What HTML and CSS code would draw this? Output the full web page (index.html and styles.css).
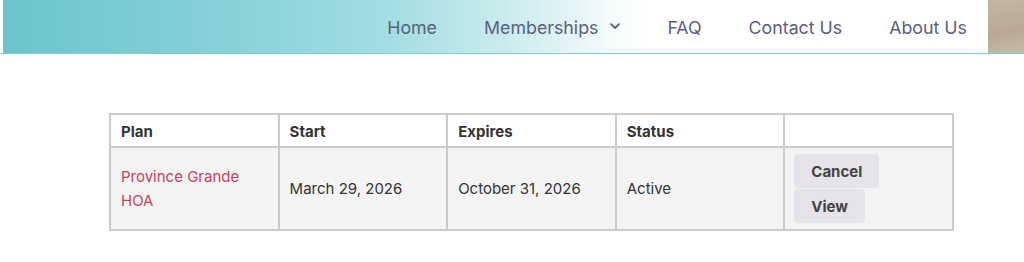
FILE: index.html
```html
<!DOCTYPE html>
<html>
<head>
<meta charset="utf-8">
<link rel="stylesheet" href="styles.css">
</head>
<body>
<header class="topbar">
  <div class="band">
    <nav class="nav">
      <a class="nav-link" href="#">Home</a>
      <a class="nav-link" href="#">Memberships
        <svg class="chev" width="10" height="7" viewBox="0 0 10 7"><path d="M1 1.2 L5 5 L9 1.2" fill="none" stroke="#5a5f7d" stroke-width="1.8" stroke-linecap="round" stroke-linejoin="round"/></svg>
      </a>
      <a class="nav-link" href="#">FAQ</a>
      <a class="nav-link" href="#">Contact Us</a>
      <a class="nav-link" href="#">About Us</a>
    </nav>
    <div class="photo"></div>
  </div>
</header>
<main class="content">
  <table class="memberships">
    <thead>
      <tr><th>Plan</th><th>Start</th><th>Expires</th><th>Status</th><th></th></tr>
    </thead>
    <tbody>
      <tr>
        <td><a class="plan" href="#">Province Grande HOA</a></td>
        <td>March 29, 2026</td>
        <td>October 31, 2026</td>
        <td>Active</td>
        <td class="actions">
          <button class="btn">Cancel</button>
          <button class="btn">View</button>
        </td>
      </tr>
    </tbody>
  </table>
</main>
</body>
</html>
```

FILE: styles.css
```css
* { box-sizing: border-box; }
body {
  margin: 0;
  background: #fff;
  font-family: Inter, "Noto Sans", sans-serif;
}
.topbar {
  border-bottom: 1px solid #7fd0d6;
  height: 54px;
}
.band {
  margin-left: 3px;
  height: 53px;
  display: flex;
  background: linear-gradient(90deg, #6cc5cc 0%, #86d2d8 22%, #a3dee2 38%, #bfe8ea 46%, #dcf2f4 54%, #f3fbfb 59%, #ffffff 63%, #ffffff 100%);
}
.nav {
  flex: 1;
  display: flex;
  justify-content: flex-end;
  align-items: center;
  padding-top: 3px;
}
.nav-link {
  color: #5b607e;
  text-decoration: none;
  font-size: 17.8px;
  margin-left: 47px;
  display: flex;
  align-items: center;
  line-height: 1;
}
.chev { margin-left: 12px; margin-top: -2px; }
.photo {
  width: 36px;
  margin-left: 21px;
  background: linear-gradient(170deg, #c4b6a4, #b9a994 60%, #c7baa9);
}
.content {
  padding: 59px 0 0 109px;
}
.memberships {
  border-collapse: collapse;
  width: 845px;
  border: 2px solid #cbcbcb;
  font-size: 15px;
  color: #333;
}
.memberships th, .memberships td {
  border: 2px solid #cbcbcb;
  width: 169px;
  text-align: left;
  padding: 0 10px;
}
.memberships th {
  height: 33px;
  font-weight: 700;
  font-size: 15px;
  color: #333;
  padding-top: 1px;
}
.memberships td {
  background: #f4f4f4;
  height: 83px;
  line-height: 24px;
}
.plan {
  color: #c9405f;
  text-decoration: none;
}
.memberships td.actions {
  padding: 6px 8px 5px 9px;
  vertical-align: top;
}
.btn {
  display: block;
  border: none;
  background: #e6e3ea;
  border-radius: 4px;
  font-family: Inter, "Noto Sans", sans-serif;
  font-weight: 700;
  font-size: 15px;
  color: #444;
  padding: 0 17px;
  height: 34px;
  margin-bottom: 1px;
}
```
